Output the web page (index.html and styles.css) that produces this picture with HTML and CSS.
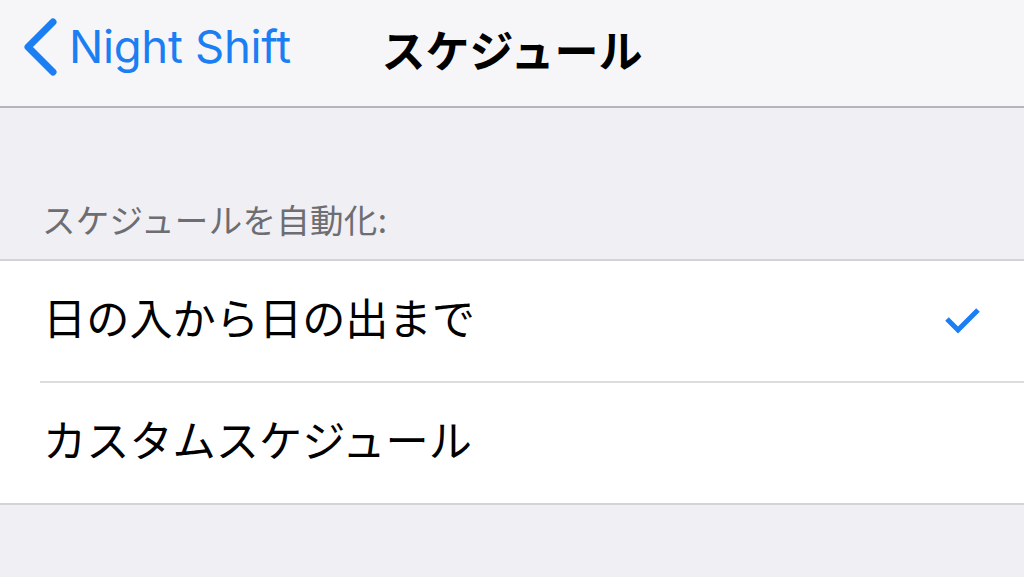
FILE: index.html
```html
<!DOCTYPE html>
<html lang="ja">
<head>
  <meta charset="UTF-8">
  <title>スケジュール</title>
  <meta name="viewport" content="width=device-width, initial-scale=1.0">
  <link rel="stylesheet" href="styles.css">
</head>
<body>

  <!-- Navigation bar -->
  <header class="navbar">
    <a class="back" href="#">
      <svg class="chevron" width="36" height="58" viewBox="0 0 36 58">
        <polyline points="31,4 6,29 31,54" fill="none" stroke="currentColor" stroke-width="7" stroke-linecap="round" stroke-linejoin="round"/>
      </svg>
      <span>Night Shift</span>
    </a>
    <h1 class="title">スケジュール</h1>
  </header>

  <div class="section-header">スケジュールを自動化:</div>

  <ul class="group">
    <li class="row">
      <span>日の入から日の出まで</span>
      <svg class="check" width="38" height="30" viewBox="0 0 38 30">
        <polyline points="3,14 14,25 34,5" fill="none" stroke="currentColor" stroke-width="5"/>
      </svg>
    </li>
    <li class="row">
      <span>カスタムスケジュール</span>
    </li>
  </ul>

</body>
</html>
```

FILE: styles.css
```css
:root {
  --blue: #1b7ef2;
  --bg: #efeff4;
  --nav: #f6f6f8;
  --line: #c8c7cc;
  --text: #000;
  --muted: #6d6d72;
}
body {
  margin: 0;
  background: var(--bg);
  font-family: 'Noto Sans CJK JP', sans-serif;
  color: var(--text);
}
.navbar {
  position: relative;
  height: 106px;
  background: var(--nav);
  border-bottom: 2px solid #b6b6ba;
  display: flex;
  align-items: center;
  justify-content: center;
}
.back {
  position: absolute;
  left: 22px;
  top: 18px;
  display: flex;
  align-items: center;
  gap: 11px;
  color: var(--blue);
  text-decoration: none;
  font-family: 'Inter', 'Roboto', sans-serif;
  font-size: 45.5px;
  letter-spacing: -0.3px;
}
.back span {
  line-height: 58px;
  margin-top: 0;
}
.title {
  margin: 0;
  font-size: 44px;
  font-weight: 700;
  line-height: 1;
  margin-top: -8px;
}
.section-header {
  height: 151px;
  box-sizing: border-box;
  padding: 0 0 16px 42px;
  display: flex;
  align-items: flex-end;
  font-size: 33.5px;
  color: var(--muted);
  letter-spacing: 0.3px;
}
.group {
  list-style: none;
  margin: 0;
  padding: 0 0 0 40px;
  background: #fff;
  border-top: 2px solid #d4d4d8;
  border-bottom: 2px solid #d4d4d8;
}
.row {
  height: 120px;
  display: flex;
  align-items: center;
  justify-content: space-between;
  padding: 0 42px 10px 3px;
  font-size: 43.2px;
  box-sizing: border-box;
}
.row + .row {
  border-top: 2px solid #dcdcdf;
  height: 122px;
}
.check {
  color: var(--blue);
  margin-top: 8px;
}
```
